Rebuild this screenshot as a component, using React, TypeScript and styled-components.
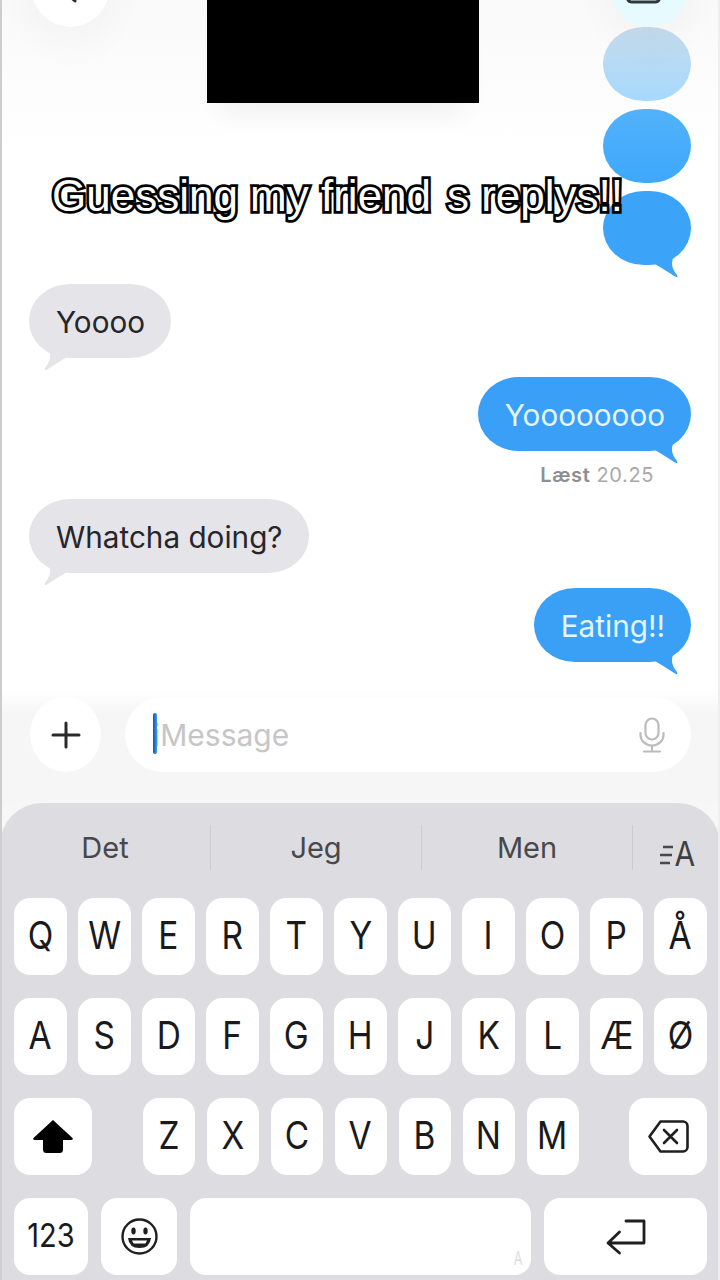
import styled, { createGlobalStyle } from "styled-components";

const GlobalStyle = createGlobalStyle`
  html, body {
    margin: 0;
    padding: 0;
    background: #fff;
  }
  * {
    box-sizing: border-box;
  }
`;

const FONT = `Inter, "Liberation Sans", Arial, sans-serif`;

const Page = styled.div`
  position: relative;
  width: 720px;
  height: 1280px;
  overflow: hidden;
  display: flex;
  flex-direction: column;
  background: #f7f7f8;
  font-family: ${FONT};

  &::after {
    content: "";
    position: absolute;
    inset: 0;
    border-left: 2px solid #cdcdcf;
    border-right: 2px solid #efeff1;
    pointer-events: none;
  }
`;

const Thread = styled.div`
  height: 690px;
  padding: 27px 29px 0;
  display: flex;
  flex-direction: column;
  background: linear-gradient(#f9f9f9, #fff 150px);
`;

const Bubble = styled.div<{ $mine?: boolean; $top: number; $bg: string; $width?: number }>`
  position: relative;
  align-self: ${(p) => (p.$mine ? "flex-end" : "flex-start")};
  flex: none;
  height: 74px;
  width: ${(p) => (p.$width ? `${p.$width}px` : "auto")};
  margin-top: ${(p) => p.$top}px;
  padding: 0 26px 0 27px;
  border-radius: 41px / 37px;
  display: flex;
  align-items: center;
  background: ${(p) => p.$bg};
  color: ${(p) => (p.$mine ? "#e4f5ff" : "#26262a")};
  font-size: 29.7px;
  white-space: nowrap;
`;

const BubbleText = styled.span`
  display: block;
  padding-top: 1px;
`;

const Tail = styled.svg<{ $mine?: boolean }>`
  position: absolute;
  bottom: -14px;
  width: 40px;
  height: 30px;
  ${(p) => (p.$mine ? "right: 0;" : "left: 2px; transform: scaleX(-1);")}
`;

const Receipt = styled.div`
  align-self: flex-end;
  margin: 14px 37px 0 0;
  height: 20px;
  line-height: 20px;
  font-size: 20px;
  letter-spacing: 0.6px;
  color: #a9a9ab;

  b {
    font-weight: 600;
    color: #8e8e90;
  }
`;

const RoundButton = styled.div<{ $side: "left" | "right"; $bg: string }>`
  position: absolute;
  top: -49px;
  ${(p) => (p.$side === "left" ? "left: 32px;" : "right: 32px;")}
  width: 77px;
  height: 76px;
  border-radius: 50%;
  background: ${(p) => p.$bg};
  box-shadow: 0 16px 34px 8px rgba(0, 0, 0, 0.025);
  display: flex;
  align-items: flex-end;
  justify-content: center;
`;

const HeaderIcon = styled.svg`
  margin-bottom: 22px;
`;

const Redaction = styled.div`
  position: absolute;
  top: 0;
  left: 207px;
  width: 272px;
  height: 103px;
  background: #000;
  box-shadow: 0 26px 26px -14px rgba(0, 0, 0, 0.05);
`;

const Caption = styled.div`
  position: absolute;
  top: 171px;
  left: 52px;
  font-family: "Liberation Sans", Arial, sans-serif;
  font-size: 44px;
  line-height: 50px;
  white-space: pre;
  color: #fff;
  -webkit-text-stroke: 5.5px #000;
  paint-order: stroke fill;
`;

const Composer = styled.div`
  height: 113px;
  padding: 7px 29px 31px 30px;
  display: flex;
  gap: 24px;
  background: linear-gradient(#fff, #f6f6f7 24px);
`;

const PlusButton = styled.div`
  width: 71px;
  height: 75px;
  flex: none;
  border-radius: 50%;
  background: #fff;
  display: flex;
  align-items: center;
  justify-content: center;
`;

const InputPill = styled.div`
  position: relative;
  flex: 1;
  height: 75px;
  padding: 0 26px 0 28px;
  border-radius: 38px;
  background: #fff;
  display: flex;
  align-items: center;
  justify-content: space-between;
`;

const Placeholder = styled.span`
  font-size: 30px;
  color: #c6c6c8;
`;

const Caret = styled.span`
  position: absolute;
  left: 28px;
  top: 16px;
  width: 4px;
  height: 41px;
  border-radius: 2px;
  background: linear-gradient(90deg, #1d4fa8, #3c9cf2);
`;

const Keyboard = styled.div`
  flex: 1;
  border-radius: 42px 42px 0 0;
  background: #dddde1;
  display: flex;
  flex-direction: column;
`;

const Suggestions = styled.div`
  height: 95px;
  padding-top: 22px;
  display: flex;
  align-items: flex-start;
`;

const Suggestion = styled.div`
  width: 211px;
  height: 45px;
  border-right: 1px solid #cbcbcf;
  display: flex;
  align-items: center;
  justify-content: center;
  font-size: 29px;
  color: #48484b;
`;

const Translate = styled.div`
  height: 50px;
  padding: 10px 0 0 27px;
  display: flex;
  align-items: center;
  font-size: 34px;
  color: #3f3f42;
`;

const Rows = styled.div`
  padding: 0 13px 0 14px;
  display: flex;
  flex-direction: column;
  gap: 23px;
`;

const Row = styled.div<{ $gap?: number; $spread?: boolean }>`
  display: flex;
  gap: ${(p) => p.$gap ?? 11}px;
  justify-content: ${(p) => (p.$spread ? "space-between" : "flex-start")};
`;

const Key = styled.div<{ $w?: number; $size?: number }>`
  position: relative;
  width: ${(p) => p.$w ?? 53}px;
  height: 77px;
  flex: none;
  border-radius: 16px;
  background: #fff;
  display: flex;
  align-items: center;
  justify-content: center;
  font-size: ${(p) => p.$size ?? 38}px;
  color: #1a1a1c;
`;

const KeyLabel = styled.span`
  display: block;
  margin-top: -4px;
  transform: scaleX(0.88);
`;

const SpaceHint = styled.span`
  position: absolute;
  right: 7px;
  bottom: 6px;
  font-size: 18px;
  color: #dcdcdf;
  transform: scaleX(0.7);
`;

const BLUE = "#3ba4f8";
const GRAY = "#e4e4e9";

const tailPath = "M0 0 V12 L4 15 Q14 21 24 27.5 Q27.5 29.5 26 26 Q17 15 24 6 L20 0 Z";

function MessageTail({ mine, fill }: { mine?: boolean; fill: string }) {
  return (
    <Tail $mine={mine} viewBox="0 0 40 30">
      <path d={tailPath} fill={fill} />
    </Tail>
  );
}

const rows = ["QWERTYUIOPÅ".split(""), "ASDFGHJKLÆØ".split("")];
const bottomLetters = "ZXCVBNM".split("");

export default function App() {
  return (
    <Page>
      <GlobalStyle />
      <Thread>
        <Bubble $mine $top={0} $width={88} $bg="linear-gradient(#c6dcec, #a6d9fd)" />
        <Bubble $mine $top={8} $width={88} $bg="linear-gradient(#52b2fb, #3ea8fa)" />
        <Bubble $mine $top={8} $width={88} $bg={BLUE}>
          <MessageTail mine fill={BLUE} />
        </Bubble>
        <Bubble $top={19} $bg={GRAY}>
          <BubbleText>Yoooo</BubbleText>
          <MessageTail fill={GRAY} />
        </Bubble>
        <Bubble $mine $top={19} $bg="#3a9ff6">
          <BubbleText>Yoooooooo</BubbleText>
          <MessageTail mine fill="#3a9ff6" />
        </Bubble>
        <Receipt>
          <b>Læst</b> 20.25
        </Receipt>
        <Bubble $top={14} $bg={GRAY}>
          <BubbleText>Whatcha doing?</BubbleText>
          <MessageTail fill={GRAY} />
        </Bubble>
        <Bubble $mine $top={15} $bg="#3aa0f6">
          <BubbleText>Eating!!</BubbleText>
          <MessageTail mine fill="#3aa0f6" />
        </Bubble>
      </Thread>

      <Composer>
        <PlusButton>
          <svg width="30" height="28" viewBox="0 0 30 28" fill="none" stroke="#2a2a2c" strokeWidth="3" strokeLinecap="round">
            <path d="M15 2 V26 M2 14 H28" />
          </svg>
        </PlusButton>
        <InputPill>
          <Placeholder>iMessage</Placeholder>
          <Caret />
          <svg width="26" height="36" viewBox="0 0 26 36" fill="none" stroke="#bcbcbe" strokeWidth="2.2" strokeLinecap="round">
            <rect x="6.5" y="1.5" width="13" height="21" rx="6.5" />
            <path d="M1.5 16 V18 a11.5 10.5 0 0 0 23 0 V16 M13 28.5 V34 M5 34.5 H21" />
          </svg>
        </InputPill>
      </Composer>

      <Keyboard>
        <Suggestions>
          <Suggestion>Det</Suggestion>
          <Suggestion>Jeg</Suggestion>
          <Suggestion>Men</Suggestion>
          <Translate>
            <svg width="13" height="22" viewBox="0 0 13 22" fill="none" stroke="#4a4a4d" strokeWidth="2.4">
              <path d="M3 3 H13 M0 11 H12 M0 19 H10" />
            </svg>
            <KeyLabel>A</KeyLabel>
          </Translate>
        </Suggestions>

        <Rows>
          {rows.map((letters) => (
            <Row key={letters[0]}>
              {letters.map((letter) => (
                <Key key={letter}>
                  <KeyLabel>{letter}</KeyLabel>
                </Key>
              ))}
            </Row>
          ))}

          <Row $spread>
            <Key $w={78}>
              <svg width="40" height="33" viewBox="0 0 40 33" fill="#000">
                <path d="M20 0 L39.5 18 Q40.5 20 38 20 H30 V29.5 Q30 33 26.5 33 H13.5 Q10 33 10 29.5 V20 H2 Q-0.5 20 0.5 18 Z" />
              </svg>
            </Key>
            <Row $gap={12}>
              {bottomLetters.map((letter) => (
                <Key key={letter} $w={52}>
                  <KeyLabel>{letter}</KeyLabel>
                </Key>
              ))}
            </Row>
            <Key $w={78}>
              <svg width="41" height="33" viewBox="0 0 41 33" fill="none" stroke="#1f1f21" strokeWidth="2.6" strokeLinejoin="round" strokeLinecap="round">
                <path d="M12.5 1.5 H35 a4.5 4.5 0 0 1 4.5 4.5 V27 a4.5 4.5 0 0 1 -4.5 4.5 H12.5 L1.5 16.5 Z" />
                <path d="M16 10 L29 23 M29 10 L16 23" />
              </svg>
            </Key>
          </Row>

          <Row $gap={13}>
            <Key $w={74} $size={33}>
              <KeyLabel>123</KeyLabel>
            </Key>
            <Key $w={76}>
              <svg width="37" height="37" viewBox="0 0 37 37" fill="none" stroke="#1f1f21" strokeWidth="2.4">
                <ellipse cx="18.5" cy="18.5" rx="17" ry="17" />
                <ellipse cx="12.5" cy="13" rx="2.2" ry="3.4" fill="#1f1f21" stroke="none" />
                <ellipse cx="24.5" cy="13" rx="2.2" ry="3.4" fill="#1f1f21" stroke="none" />
                <path d="M7 20 H30 Q29 30 18.5 30 Q8 30 7 20 Z" fill="#1f1f21" stroke="none" />
                <path d="M11 22.5 H26 Q25 25 24 25.5 H13 Q12 25 11 22.5 Z" fill="#fff" stroke="none" />
              </svg>
            </Key>
            <Key $w={341}>
              <SpaceHint>A</SpaceHint>
            </Key>
            <Key $w={163}>
              <svg width="40" height="36" viewBox="0 0 40 36" fill="none" stroke="#1f1f21" strokeWidth="2.8" strokeLinecap="round" strokeLinejoin="round">
                <path d="M20 2 H38 V24 H2 M13.5 13 L2 24 L13.5 34" />
              </svg>
            </Key>
          </Row>
        </Rows>
      </Keyboard>

      <RoundButton $side="left" $bg="#fff">
        <HeaderIcon width="14" height="12" viewBox="0 0 14 12" fill="none" stroke="#2a2a2c" strokeWidth="3" strokeLinecap="round">
          <path d="M2 0 L11 8" />
        </HeaderIcon>
      </RoundButton>
      <RoundButton $side="right" $bg="#e7fbff">
        <HeaderIcon width="50" height="10" viewBox="0 0 50 10" fill="none" stroke="#2f3a3d" strokeWidth="3" strokeLinecap="round">
          <path d="M2 0 Q2 7 7 7 H30 Q35 7 35 0" />
          <path d="M44 0 L46 2" />
        </HeaderIcon>
      </RoundButton>
      <Redaction />
      <Caption>{"Guessing my friend \u200As replys!!"}</Caption>
    </Page>
  );
}
